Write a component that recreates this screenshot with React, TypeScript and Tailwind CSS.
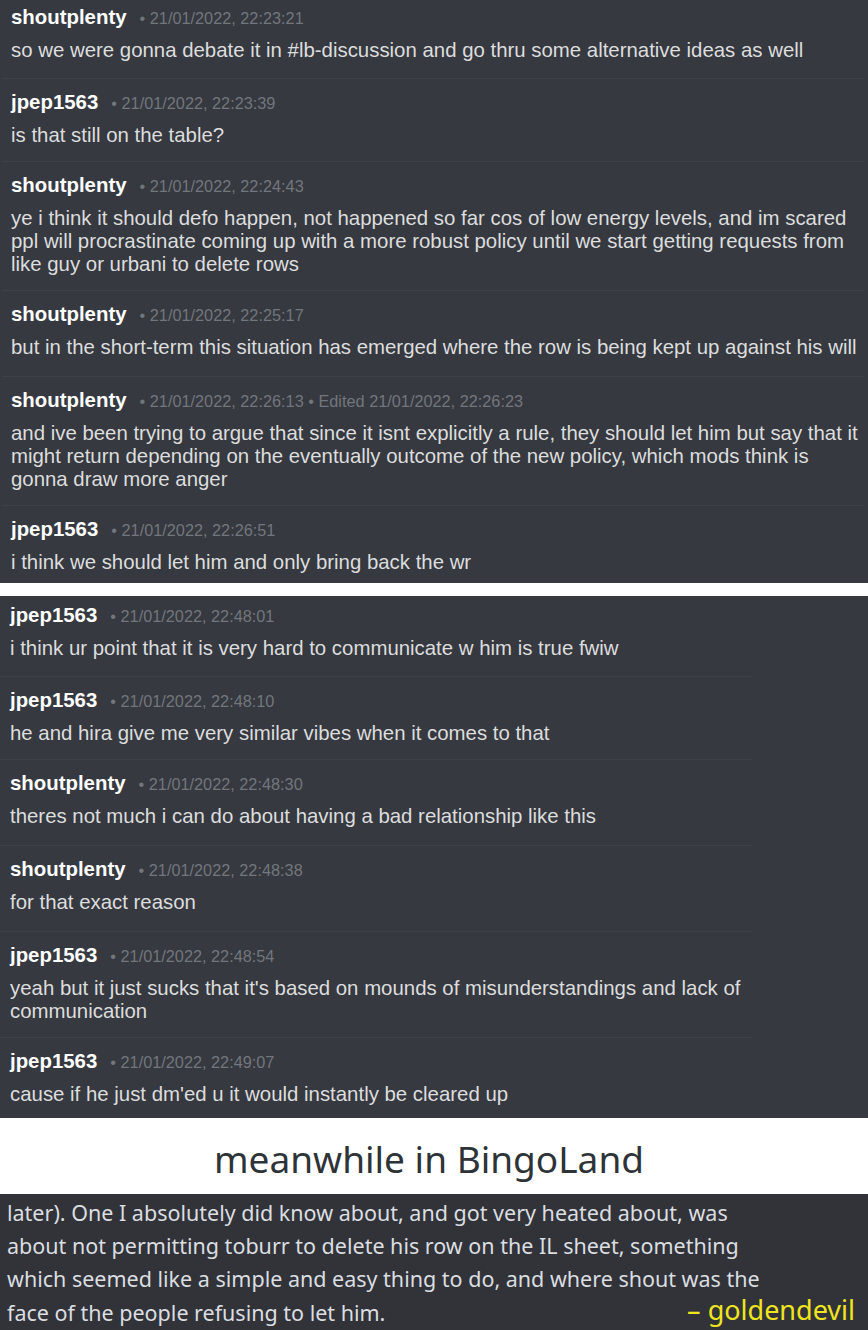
import React from 'react';

type Message = {
  user: string;
  time: string;
  edited?: string;
  text: string;
  pad: string;
};

const firstLog: Message[] = [
  { user: 'shoutplenty', time: '21/01/2022, 22:23:21', text: 'so we were gonna debate it in #lb-discussion and go thru some alternative ideas as well', pad: 'pt-[5px] pb-[16px]' },
  { user: 'jpep1563', time: '21/01/2022, 22:23:39', text: 'is that still on the table?', pad: 'pt-[11px] pb-[14px]' },
  { user: 'shoutplenty', time: '21/01/2022, 22:24:43', text: 'ye i think it should defo happen, not happened so far cos of low energy levels, and im scared ppl will procrastinate coming up with a more robust policy until we start getting requests from like guy or urbani to delete rows', pad: 'pt-[11px] pb-[14px]' },
  { user: 'shoutplenty', time: '21/01/2022, 22:25:17', text: 'but in the short-term this situation has emerged where the row is being kept up against his will', pad: 'pt-[11px] pb-[17px]' },
  { user: 'shoutplenty', time: '21/01/2022, 22:26:13', edited: '21/01/2022, 22:26:23', text: 'and ive been trying to argue that since it isnt explicitly a rule, they should let him but say that it might return depending on the eventually outcome of the new policy, which mods think is gonna draw more anger', pad: 'pt-[11px] pb-[14px]' },
  { user: 'jpep1563', time: '21/01/2022, 22:26:51', text: 'i think we should let him and only bring back the wr', pad: 'pt-[11px] pb-[14px]' },
];

const secondLog: Message[] = [
  { user: 'jpep1563', time: '21/01/2022, 22:48:01', text: 'i think ur point that it is very hard to communicate w him is true fwiw', pad: 'pt-[7px] pb-[16px]' },
  { user: 'jpep1563', time: '21/01/2022, 22:48:10', text: 'he and hira give me very similar vibes when it comes to that', pad: 'pt-[11px] pb-[14px]' },
  { user: 'shoutplenty', time: '21/01/2022, 22:48:30', text: 'theres not much i can do about having a bad relationship like this', pad: 'pt-[11px] pb-[17px]' },
  { user: 'shoutplenty', time: '21/01/2022, 22:48:38', text: 'for that exact reason', pad: 'pt-[11px] pb-[17px]' },
  { user: 'jpep1563', time: '21/01/2022, 22:48:54', text: "yeah but it just sucks that it's based on mounds of misunderstandings and lack of communication", pad: 'pt-[11px] pb-[14px]' },
  { user: 'jpep1563', time: '21/01/2022, 22:49:07', text: "cause if he just dm'ed u it would instantly be cleared up", pad: 'pt-[11px] pb-[14px]' },
];

const MessageRow = ({ msg, last, inset }: { msg: Message; last: boolean; inset: string }) => (
  <div className={`${msg.pad} ${inset} ${last ? '' : 'border-b border-[#3f4147]'}`}>
    <div className="flex h-[24px] items-baseline leading-[24px]">
      <span className="text-[20.4px] font-bold text-white">{msg.user}</span>
      <span className="ml-[13px] text-[16.3px] leading-[16px] text-[#72767d]">
        • {msg.time}
        {msg.edited && ` • Edited ${msg.edited}`}
      </span>
    </div>
    <p className="mt-[10px] text-[20.4px] leading-[23px] text-[#dcddde]">{msg.text}</p>
  </div>
);

export default function App() {
  return (
    <div className="w-[868px] h-[1330px] overflow-hidden bg-white font-['Liberation_Sans',Arial,sans-serif]">
      {/* first screenshot */}
      <section className="h-[583px] overflow-hidden bg-[#36393f]">
        <div className="ml-[2px] mr-[4px]">
          {firstLog.map((m, i) => (
            <MessageRow key={i} msg={m} last={i === firstLog.length - 1} inset="pl-[9px]" />
          ))}
        </div>
      </section>

      <div className="h-[13px] bg-white" />

      {/* second screenshot, narrower window */}
      <section className="h-[522px] overflow-hidden bg-[#36393f]">
        <div className="w-[752px]">
          {secondLog.map((m, i) => (
            <MessageRow key={i} msg={m} last={i === secondLog.length - 1} inset="pl-[10px]" />
          ))}
        </div>
      </section>

      <div className="h-[76px] bg-white flex items-center justify-center pr-[10px] pt-[6px]">
        <h2 className="font-['Noto_Sans',sans-serif] text-[37px] text-[#2e3338]">meanwhile in BingoLand</h2>
      </div>

      <section className="h-[136px] bg-[#313338] pl-[7px] pr-[13px] pt-[2px] font-['Noto_Sans',sans-serif] text-[21.5px] leading-[33px] text-[#dbdee1]">
        <p>later). One I absolutely did know about, and got very heated about, was</p>
        <p>about not permitting toburr to delete his row on the IL sheet, something</p>
        <p>which seemed like a simple and easy thing to do, and where shout was the</p>
        <div className="flex items-end justify-between">
          <p>face of the people refusing to let him.</p>
          <span className="mb-[4px] text-[27px] leading-[30px] text-[#efe51f]">– goldendevil</span>
        </div>
      </section>
    </div>
  );
}
